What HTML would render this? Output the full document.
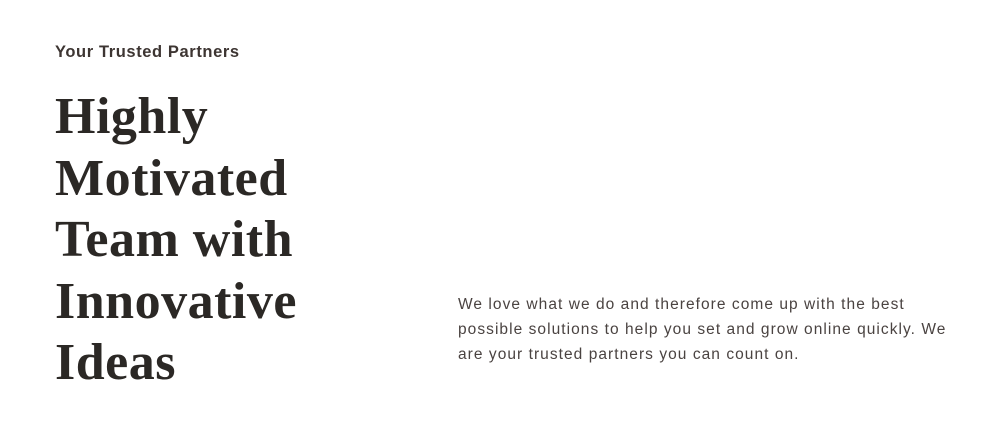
<!DOCTYPE html>
<html><head><style>
html,body{margin:0;padding:0;background:#fff;width:1001px;height:427px;overflow:hidden}
.sub{position:absolute;left:55px;top:43px;font:600 16.5px "Liberation Sans",sans-serif;color:#3d3532;letter-spacing:0.6px}
h1{position:absolute;left:55px;top:86px;margin:0;font:bold 52px/61.5px "Liberation Serif",serif;color:#2b2825;letter-spacing:0.5px}
p{position:absolute;left:458px;top:292px;width:500px;margin:0;font:15.5px/25px "Liberation Sans",sans-serif;color:#4a4341;letter-spacing:1.05px}
</style></head><body>
<div class="sub">Your Trusted Partners</div>
<h1>Highly<br>Motivated<br>Team with<br>Innovative<br>Ideas</h1>
<p>We love what we do and therefore come up with the best<br>possible solutions to help you set and grow online quickly. We<br>are your trusted partners you can count on.</p>
</body></html>
